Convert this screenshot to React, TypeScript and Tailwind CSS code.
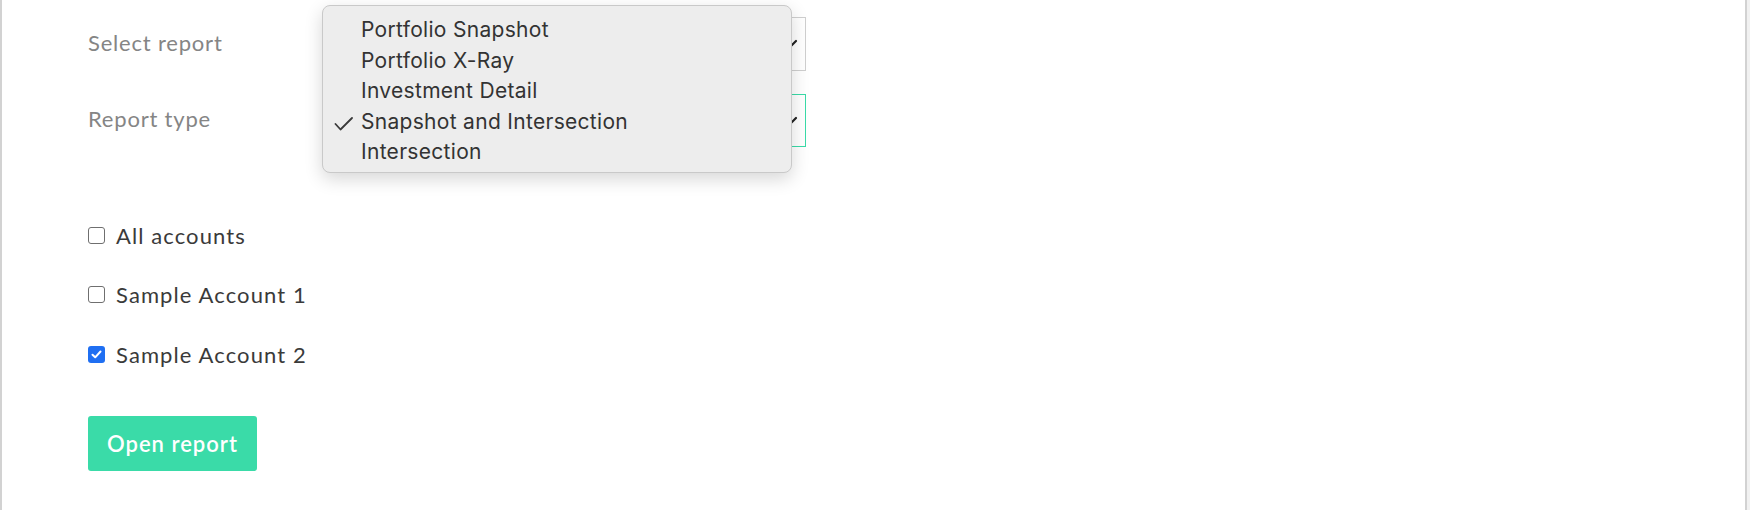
import React from 'react'

const reportOptions = [
  'Portfolio Snapshot',
  'Portfolio X-Ray',
  'Investment Detail',
  'Snapshot and Intersection',
  'Intersection',
]

const accounts = [
  { name: 'All accounts', checked: false },
  { name: 'Sample Account 1', checked: false },
  { name: 'Sample Account 2', checked: true },
]

const Chevron = () => (
  <svg width="14" height="10" viewBox="0 0 14 10" className="mr-[7px]">
    <path d="M2 2 L7 7 L12 2" fill="none" stroke="#222" strokeWidth="2.2" strokeLinecap="round" />
  </svg>
)

const Checkbox = ({ checked }: { checked: boolean }) =>
  checked ? (
    <span className="flex h-[17px] w-[17px] shrink-0 items-center justify-center rounded-[3px] bg-[#1f6ff2]">
      <svg width="11" height="9" viewBox="0 0 11 9">
        <path d="M1.5 4.8 L4.2 7.3 L9.5 1.5" fill="none" stroke="white" strokeWidth="2" strokeLinecap="round" strokeLinejoin="round" />
      </svg>
    </span>
  ) : (
    <span className="block h-[17px] w-[17px] shrink-0 rounded-[3px] border border-[#6f6f6f] bg-white" />
  )

const ReportMenu = () => (
  <div
    className="absolute left-[322px] top-[5px] h-[168px] w-[470px] rounded-[8px] border border-[#c9c9c9] bg-[#ededed] pt-[9px] text-[21px] leading-[30.5px] tracking-[0.3px] text-[#333] shadow-[0_6px_18px_rgba(0,0,0,0.16)]"
    style={{ fontFamily: 'Inter, "Liberation Sans", sans-serif' }}
  >
    {reportOptions.map((opt, i) => (
      <div key={opt} className="relative pl-[38px]">
        {i === 3 && (
          <svg width="20" height="14" viewBox="0 0 20 14" className="absolute left-[11px] top-[10px]">
            <path d="M1.5 7 L6.5 12.5 L18 1" fill="none" stroke="#3a3a3a" strokeWidth="1.8" strokeLinecap="round" strokeLinejoin="round" />
          </svg>
        )}
        {opt}
      </div>
    ))}
  </div>
)

export default function App() {
  return (
    <div className="relative h-[510px] w-[1750px] overflow-hidden bg-[#f1f1f1]" style={{ fontFamily: 'Lato, "Open Sans", sans-serif' }}>
      <div className="h-full w-[1747px] border-l-2 border-r-2 border-[#d2d2d2] bg-white pl-[86px] pt-[17px]">
        {/* Report selects */}
        <div className="flex h-[54px] items-center">
          <div className="mb-[4px] w-[252px] text-[22px] tracking-[0.8px] text-[#858585]">Select report</div>
          <div className="flex h-[54px] w-[466px] items-center justify-end border border-[#cfcfcf] bg-white">
            <Chevron />
          </div>
        </div>
        <div className="mt-[23px] flex h-[53px] items-center">
          <div className="mb-[4px] w-[252px] text-[22px] tracking-[0.8px] text-[#858585]">Report type</div>
          <div className="flex h-[53px] w-[466px] items-center justify-end border border-[#3adba8] bg-white">
            <Chevron />
          </div>
        </div>

        {/* Accounts */}
        <div className="mt-[76px] flex flex-col gap-[35.5px]">
          {accounts.map((a) => (
            <label key={a.name} className="flex h-[24px] items-center gap-[11px] text-[22px] tracking-[1.1px] text-[#3a3a3a]">
              <Checkbox checked={a.checked} />
              {a.name}
            </label>
          ))}
        </div>

        <button className="mt-[50px] h-[55px] w-[169px] rounded-[3px] bg-[#3adba8] pl-[19px] text-left text-[22px] font-semibold tracking-[1px] text-white">
          Open report
        </button>
      </div>
      <ReportMenu />
    </div>
  )
}
